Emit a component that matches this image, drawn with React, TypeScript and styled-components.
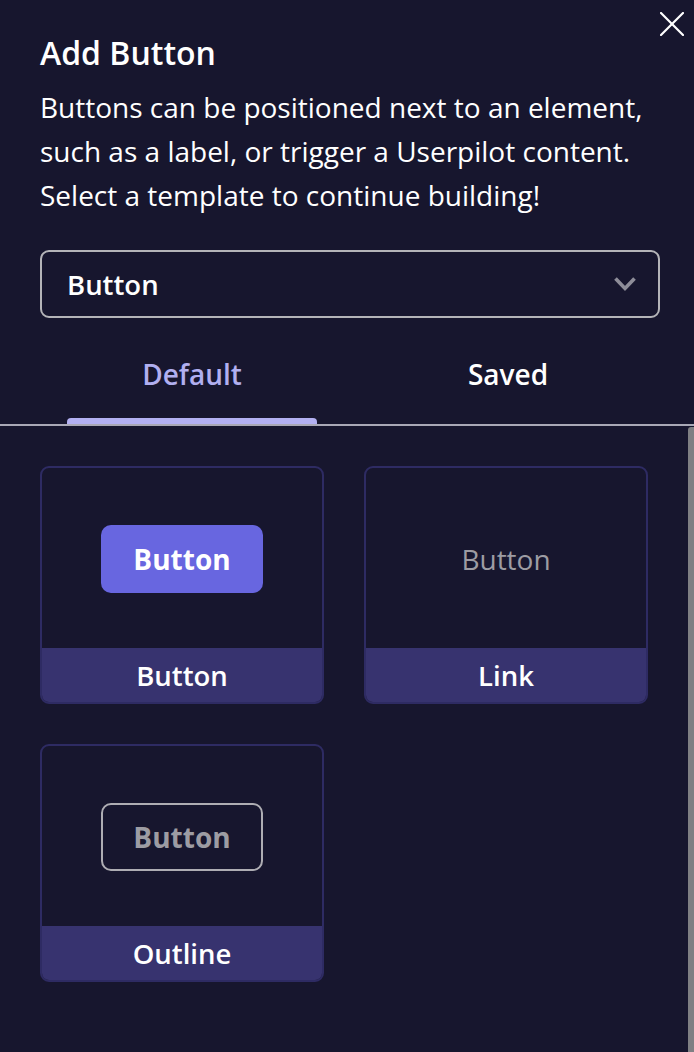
import React from "react";
import styled, { createGlobalStyle } from "styled-components";

const Global = createGlobalStyle`
  html, body { margin: 0; padding: 0; background: #17162e; }
  body { font-family: "Open Sans", "Noto Sans", sans-serif; color: #ffffff; }
  * { box-sizing: border-box; }
`;

const Panel = styled.div`
  width: 694px;
  height: 1052px;
  background: #17162e;
  position: relative;
  overflow: hidden;
  display: flex;
  flex-direction: column;
`;

const CloseButton = styled.button`
  position: absolute;
  top: 12px;
  right: 10px;
  width: 24px;
  height: 24px;
  padding: 0;
  border: none;
  background: transparent;
  cursor: pointer;
  display: flex;
`;

const Header = styled.div`
  padding: 32px 40px 0 40px;
  display: flex;
  flex-direction: column;
`;

const Title = styled.h1`
  margin: 0;
  font-size: 32px;
  font-weight: 600;
  line-height: 42px;
  color: #ffffff;
`;

const Description = styled.p`
  margin: 11px 0 0 0;
  font-size: 28px;
  line-height: 44px;
  font-weight: 400;
  color: #ffffff;
  white-space: nowrap;
`;

const Select = styled.div`
  margin: 33px 34px 0 40px;
  height: 68px;
  border: 2px solid #b4b4b8;
  border-radius: 9px;
  display: flex;
  align-items: center;
  justify-content: space-between;
  padding: 0 21px 0 25px;
  font-size: 27.5px;
  font-weight: 600;
`;

const Tabs = styled.div`
  margin-top: 20px;
  display: flex;
  gap: 66px;
  padding-left: 67px;
  border-bottom: 2px solid #a9a8b6;
`;

const Tab = styled.div<{ $active?: boolean }>`
  width: 250px;
  height: 86px;
  display: flex;
  align-items: center;
  justify-content: center;
  padding-bottom: 14px;
  font-size: 28px;
  font-weight: 600;
  color: ${(p) => (p.$active ? "#b1aff0" : "#ffffff")};
  position: relative;
  &::after {
    content: "";
    display: ${(p) => (p.$active ? "block" : "none")};
    position: absolute;
    left: 0;
    right: 0;
    bottom: 0;
    height: 6px;
    border-radius: 4px 4px 0 0;
    background: #b3b0f2;
  }
`;

const Body = styled.div`
  flex: 1;
  position: relative;
  padding: 40px 40px 0 40px;
`;

const Scrollbar = styled.div`
  position: absolute;
  right: 0;
  top: 1px;
  bottom: 0;
  width: 6px;
  background: #7f7f83;
  border-radius: 3px 0 0 0;
`;

const Grid = styled.div`
  display: grid;
  grid-template-columns: 284px 284px;
  column-gap: 40px;
  row-gap: 40px;
`;

const Card = styled.div`
  height: 238px;
  border: 2px solid #2e2b63;
  border-radius: 9px;
  overflow: hidden;
  display: flex;
  flex-direction: column;
  background: #17162e;
`;

const Preview = styled.div`
  flex: 1;
  display: flex;
  align-items: center;
  justify-content: center;
  padding-top: 2px;
`;

const Label = styled.div`
  height: 54px;
  background: #37336f;
  display: flex;
  align-items: center;
  justify-content: center;
  font-size: 27.5px;
  font-weight: 600;
  color: #ffffff;
`;

const SampleButton = styled.div<{ $variant: "solid" | "link" | "outline" }>`
  width: 162px;
  height: 68px;
  border-radius: 10px;
  display: flex;
  align-items: center;
  justify-content: center;
  font-size: 28px;
  font-weight: ${(p) => (p.$variant === "link" ? 500 : 700)};
  background: ${(p) => (p.$variant === "solid" ? "#6866e0" : "transparent")};
  color: ${(p) => (p.$variant === "solid" ? "#ffffff" : "#9d9ca3")};
  border: ${(p) => (p.$variant === "outline" ? "2px solid #aeadb3" : "none")};
`;

const Chevron = () => (
  <svg width="24" height="16" viewBox="0 0 24 16" fill="none" stroke="#8e8d99" strokeWidth="3.6" strokeLinecap="butt" strokeLinejoin="miter">
    <polyline points="2.5,2.5 12,12.5 21.5,2.5" />
  </svg>
);

const CloseIcon = () => (
  <svg width="24" height="24" viewBox="0 0 24 24" fill="none" stroke="#ffffff" strokeWidth="2.2" strokeLinecap="round">
    <line x1="1" y1="1" x2="23" y2="23" />
    <line x1="23" y1="1" x2="1" y2="23" />
  </svg>
);

const templates: { label: string; variant: "solid" | "link" | "outline" }[] = [
  { label: "Button", variant: "solid" },
  { label: "Link", variant: "link" },
  { label: "Outline", variant: "outline" },
];

export default function App() {
  return (
    <>
      <Global />
      <Panel>
        <CloseButton aria-label="Close">
          <CloseIcon />
        </CloseButton>
        <Header>
          <Title>Add Button</Title>
          <Description>
            Buttons can be positioned next to an element,
            <br />
            such as a label, or trigger a Userpilot content.
            <br />
            Select a template to continue building!
          </Description>
        </Header>
        <Select>
          <span>Button</span>
          <Chevron />
        </Select>
        <Tabs>
          <Tab $active>Default</Tab>
          <Tab>Saved</Tab>
        </Tabs>
        <Body>
          <Scrollbar />
          <Grid>
            {templates.map((t) => (
              <Card key={t.label}>
                <Preview>
                  <SampleButton $variant={t.variant}>Button</SampleButton>
                </Preview>
                <Label>{t.label}</Label>
              </Card>
            ))}
          </Grid>
        </Body>
      </Panel>
    </>
  );
}
